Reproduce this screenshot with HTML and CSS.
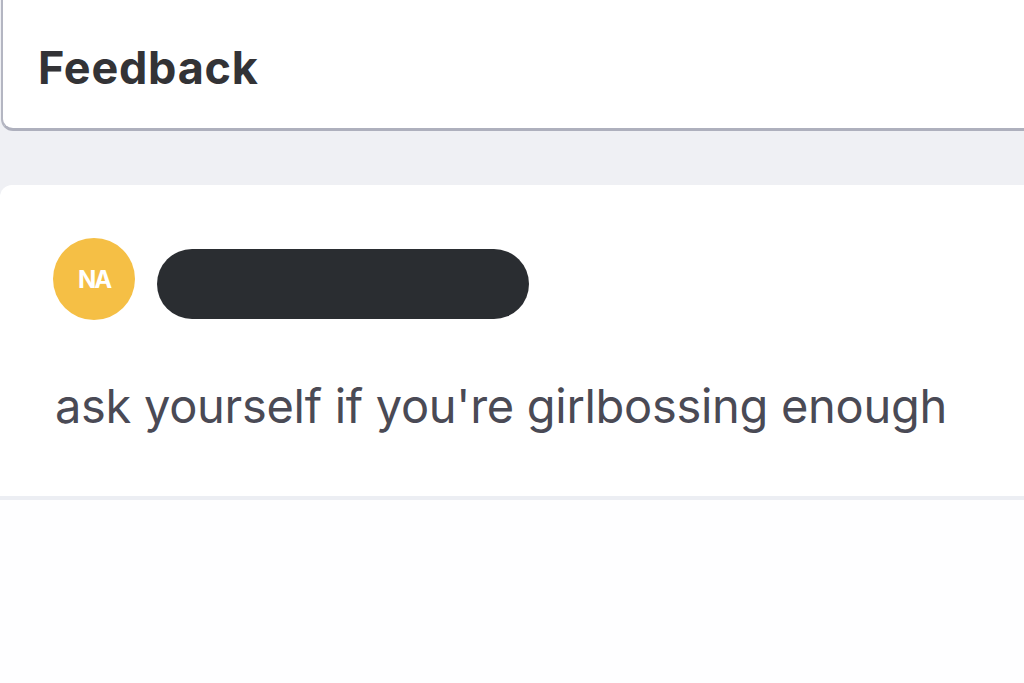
FILE: index.html
```html
<!DOCTYPE html>
<html lang="en">
<head>
    <meta charset="UTF-8">
    <meta name="viewport" content="width=device-width, initial-scale=1.0">
    <title>Feedback</title>
    <link rel="stylesheet" href="styles.css">
</head>
<body>
    <header class="page-header">
        <h1>Feedback</h1>
    </header>
    <div class="feed">
        <div class="comment-card">
            <div class="comment-head">
                <div class="avatar">NA</div>
                <div class="redacted"></div>
            </div>
            <p class="comment-text">ask yourself if you're girlbossing enough</p>
        </div>
        <div class="feed-rest"></div>
    </div>
</body>
</html>
```

FILE: styles.css
```css
body {
    margin: 0;
    background-color: #eff0f4;
    font-family: Inter, "Noto Sans", Arial, sans-serif;
    height: 683px;
    overflow: hidden;
}
.page-header {
    background: #fff;
    margin-left: 1px;
    height: 131px;
    border-left: 2px solid #b4b6c2;
    border-bottom: 3px solid #aeb0bd;
    border-bottom-left-radius: 12px;
    display: flex;
    align-items: center;
    padding-left: 35px;
    padding-top: 6px;
    box-sizing: border-box;
}
.page-header h1 {
    margin: 0;
    font-size: 45px;
    font-weight: 700;
    letter-spacing: 0.75px;
    color: #333336;
}
.feed {
    margin-top: 54px;
}
.comment-card {
    background: #fff;
    border-top-left-radius: 12px;
    height: 315px;
    border-bottom: 4px solid #eceef3;
    padding: 53px 0 0 53px;
    box-sizing: border-box;
}
.comment-head {
    display: flex;
    align-items: center;
    gap: 22px;
}
.avatar {
    width: 82px;
    height: 82px;
    border-radius: 50%;
    background: #f5bf45;
    color: #fff;
    font-size: 24px;
    font-weight: 700;
    letter-spacing: -2px;
    display: flex;
    align-items: center;
    justify-content: center;
}
.redacted {
    width: 372px;
    height: 70px;
    margin-top: 10px;
    border-radius: 35px;
    background: #2a2d31;
}
.comment-text {
    margin: 58px 0 0 2px;
    font-size: 47px;
    letter-spacing: -0.3px;
    line-height: 56px;
    color: #4a4a55;
}
.feed-rest {
    background: #fefeff;
    height: 200px;
}
```
